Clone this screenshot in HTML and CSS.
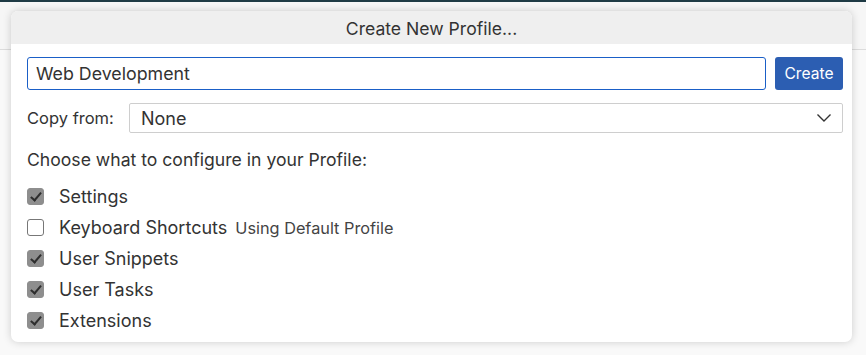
FILE: index.html
```html
<!DOCTYPE html>
<html lang="en">
<head>
  <meta charset="UTF-8" />
  <title>Create New Profile</title>
  <link rel="stylesheet" href="styles.css">
</head>
<body>
  <div class="backdrop">
    <div class="dialog">
      <div class="dialog-title">Create New Profile...</div>
      <div class="dialog-body">
        <div class="name-row">
          <input type="text" class="name-input" value="Web Development" />
          <button class="create-btn">Create</button>
        </div>

        <div class="copy-row">
          <label class="copy-label">Copy from:</label>
          <div class="select-box">
            <span>None</span>
            <svg class="chevron" width="16" height="10" viewBox="0 0 16 10">
              <path d="M1.5 1.5 L8 8 L14.5 1.5" fill="none" stroke="#333" stroke-width="1.4" />
            </svg>
          </div>
        </div>

        <div class="section-label">Choose what to configure in your Profile:</div>

        <ul class="options">
          <li><span class="check checked"></span>Settings</li>
          <li><span class="check"></span>Keyboard Shortcuts <span class="hint">Using Default Profile</span></li>
          <li><span class="check checked"></span>User Snippets</li>
          <li><span class="check checked"></span>User Tasks</li>
          <li><span class="check checked"></span>Extensions</li>
        </ul>
      </div>
    </div>
  </div>
</body>
</html>
```

FILE: styles.css
```css
body {
  margin: 0;
  font-family: Inter, "Noto Sans", sans-serif;
  background-color: #f6f6f6;
  color: #333;
  border-top: 2px solid #1e3a44;
}
.backdrop {
  height: 353px;
  padding: 9px 14px 0 11px;
  box-sizing: border-box;
  background: linear-gradient(to bottom, #f6f6f6 47px, #dcdcdc 47px, #dcdcdc 48px, #f9f9f9 48px);
}
.dialog {
  width: 841px;
  height: 331px;
  background-color: #fff;
  border-radius: 7px;
  box-shadow: 0 0 8px rgba(0,0,0,0.18);
  overflow: hidden;
}
.dialog-title {
  height: 33px;
  line-height: 35px;
  background-color: #efefef;
  text-align: center;
  font-size: 17.6px;
  color: #333;
}
.dialog-body {
  padding: 13px 9px 0 16px;
}
.name-row {
  display: flex;
  gap: 9px;
}
.name-input {
  flex: 1;
  height: 33px;
  box-sizing: border-box;
  border: 1px solid #1a5fc7;
  border-radius: 3px;
  padding: 0 8px;
  font-family: inherit;
  font-size: 17.8px;
  color: #333;
  outline: none;
}
.create-btn {
  width: 68px;
  height: 33px;
  border: none;
  border-radius: 3px;
  background-color: #2c5eb2;
  color: #fff;
  font-family: inherit;
  font-size: 15.6px;
  cursor: pointer;
}
.copy-row {
  display: flex;
  align-items: center;
  margin-top: 13px;
}
.copy-label {
  width: 102px;
  font-size: 16.5px;
}
.select-box {
  flex: 1;
  height: 30px;
  box-sizing: border-box;
  border: 1px solid #cecece;
  border-radius: 2px;
  display: flex;
  align-items: center;
  justify-content: space-between;
  padding: 0 10px 0 11px;
  font-size: 18px;
}
.section-label {
  margin-top: 16px;
  font-size: 17.6px;
}
.options {
  list-style: none;
  margin: 11px 0 0;
  padding: 0;
}
.options li {
  height: 31px;
  display: flex;
  align-items: center;
  font-size: 18px;
}
.check {
  width: 17px;
  height: 17px;
  box-sizing: border-box;
  border: 1px solid #777;
  border-radius: 3px;
  margin-right: 15px;
  background-color: #fff;
  position: relative;
}
.check.checked {
  background-color: #8e8e8e;
  border-color: #8e8e8e;
}
.check.checked::after {
  content: "";
  position: absolute;
  left: 5px;
  top: 1px;
  width: 4px;
  height: 9px;
  border: solid #2e2e2e;
  border-width: 0 2.5px 2.5px 0;
  transform: rotate(40deg);
}
.hint {
  font-size: 16.3px;
  color: #444;
  margin-left: 8px;
}
```
